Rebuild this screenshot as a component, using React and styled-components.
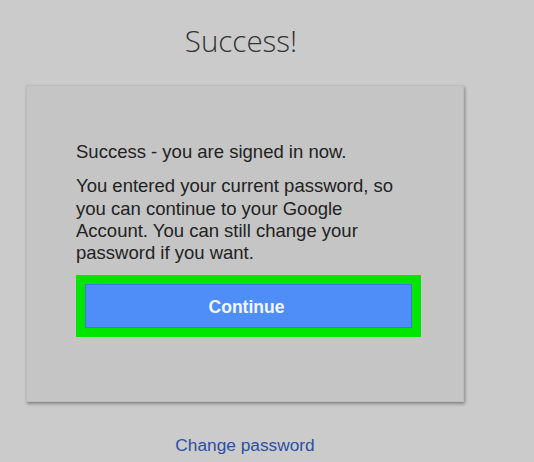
import React from 'react';
import styled, { createGlobalStyle } from 'styled-components';

const GlobalStyle = createGlobalStyle`
  html, body {
    margin: 0;
    padding: 0;
    background: #cbcbcb;
  }
  body {
    font-family: "Liberation Sans", Arial, sans-serif;
  }
`

const Page = styled.div`
  width: 534px;
  height: 462px;
  overflow: hidden;
  background: #cbcbcb;
`

const Column = styled.div`
  width: 438px;
  margin-left: 26px;
  display: flex;
  flex-direction: column;
  align-items: center;
`

const Title = styled.h1`
  margin: 21px 8px 0 0;
  font-family: "Open Sans", sans-serif;
  font-weight: 300;
  font-size: 29.5px;
  line-height: 40px;
  color: #333;
`

const Card = styled.div`
  align-self: stretch;
  margin-top: 24px;
  height: 317px;
  box-sizing: border-box;
  padding: 55px 42px 0 49px;
  background: #c5c5c5;
  border: 1px solid #bcbcbc;
  box-shadow: 1px 2px 3px rgba(0, 0, 0, 0.35);
`

const Text = styled.p`
  max-width: 320px;
  margin: 0 0 ${p => p.gap || 0}px;
  font-size: 18.5px;
  line-height: 22.3px;
  color: #222;
`

const Highlight = styled.div`
  margin-top: 11px;
  padding: 9px;
  background: #00e600;
`

const Button = styled.button`
  display: block;
  width: 100%;
  height: 44px;
  padding: 3px 4px 0 0;
  border: 1px solid #3d78dd;
  background: #4f8ef8;
  color: #f4f6ff;
  font-family: "Liberation Sans", Arial, sans-serif;
  font-weight: bold;
  font-size: 17.5px;
  cursor: pointer;
`

const Link = styled.a`
  margin-top: 33px;
  font-size: 17.3px;
  color: #2d4fa3;
  text-decoration: none;
`

export default function App() {
  return (
    <Page>
      <GlobalStyle />
      <Column>
        <Title>Success!</Title>
        <Card>
          <Text gap={12}>Success - you are signed in now.</Text>
          <Text>
            You entered your current password, so you can continue to your Google
            Account. You can still change your password if you want.
          </Text>
          <Highlight>
            <Button>Continue</Button>
          </Highlight>
        </Card>
        <Link href="#">Change password</Link>
      </Column>
    </Page>
  );
}
